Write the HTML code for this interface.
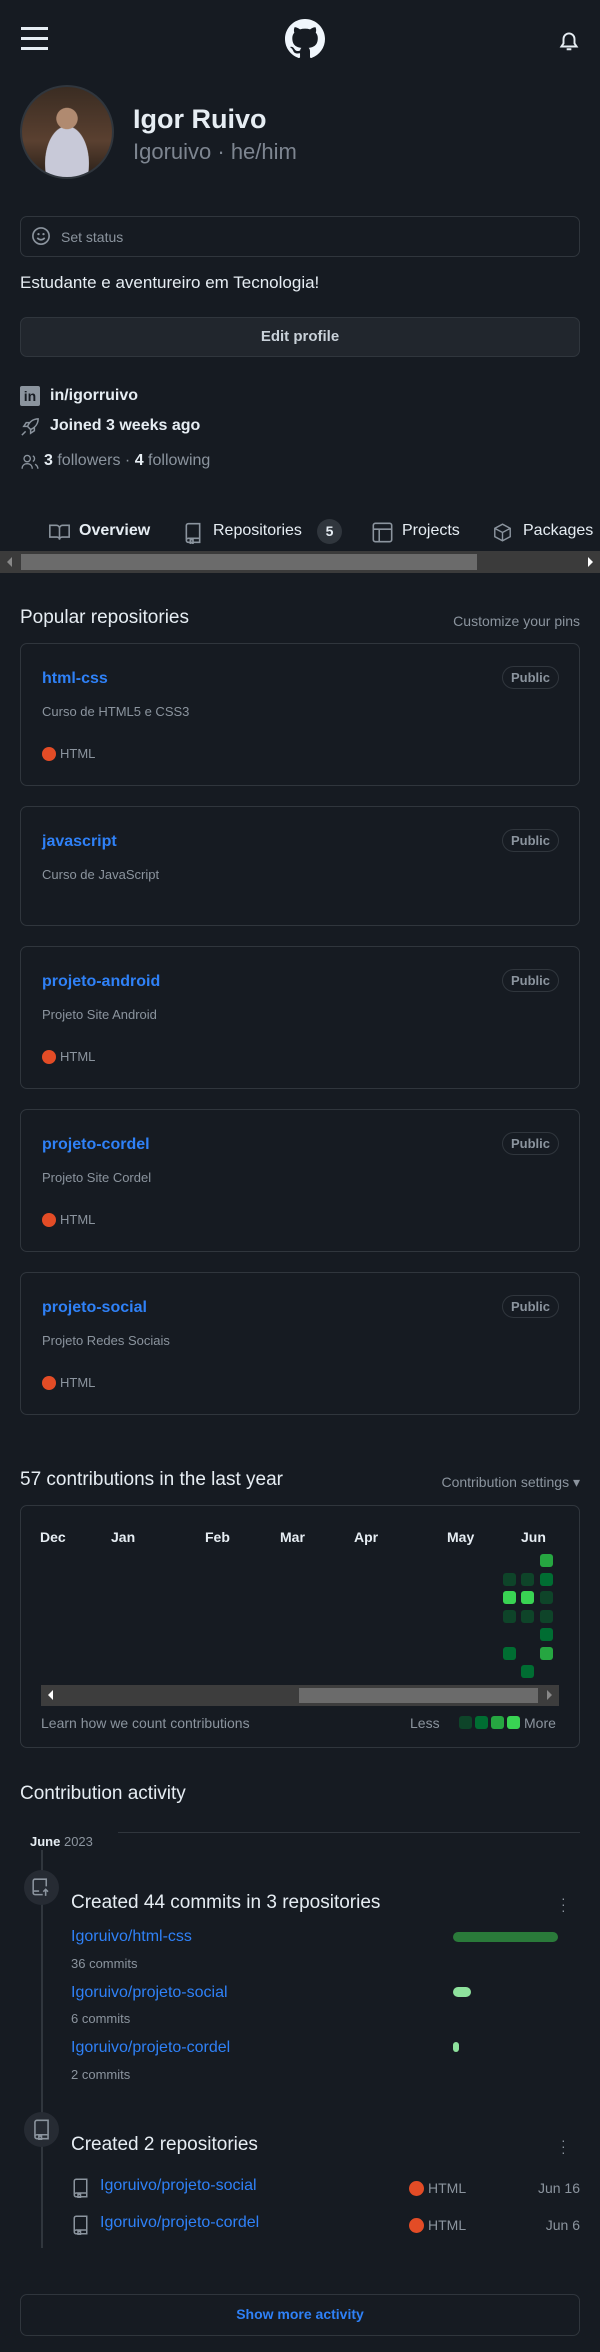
<!DOCTYPE html>
<html><head><meta charset="utf-8"><style>
*{margin:0;padding:0;box-sizing:border-box}
body{width:600px;height:2352px;background:#161b22;color:#e6edf3;font-family:"Liberation Sans",sans-serif;position:relative;overflow:hidden}
.a{position:absolute;white-space:nowrap}
.muted{color:#8b949e}
.link{color:#2f81f7}
.box{position:absolute;border:1px solid #30363d;border-radius:7px}
.card{position:absolute;left:20px;width:560px;border:1px solid #30363d;border-radius:7px}
.card .t{position:absolute;left:21px;top:26px;font-size:16px;font-weight:bold;color:#2f81f7}
.card .d{position:absolute;left:21px;top:60px;font-size:13px;color:#8b949e}
.card .p{position:absolute;right:20px;top:22px;border:1px solid #30363d;border-radius:14px;font-size:13px;font-weight:bold;color:#8b949e;padding:3px 8px}
.card .l{position:absolute;left:21px;top:102px;font-size:13px;color:#8b949e}
.dot{display:inline-block;width:14px;height:14px;border-radius:50%;background:#e34c26;vertical-align:-3px;margin-right:4px}
.c{position:absolute;width:13px;height:13px;border-radius:3px}
.g1{background:#0e4429}.g2{background:#006d32}.g3{background:#26a641}.g4{background:#39d353}
</style></head><body>
<div class="a" style="left:21px;top:27px;width:27px;height:3px;background:#e6edf3;box-shadow:0 10px 0 #e6edf3,0 20px 0 #e6edf3"></div>
<svg class="a" style="left:285px;top:19px" width="40" height="40" viewBox="0 0 16 16"><path fill="#f0f6fc" d="M8 0C3.58 0 0 3.58 0 8c0 3.54 2.29 6.530 5.47 7.59.4.07.55-.17.55-.38 0-.19-.01-.82-.01-1.49-2.01.37-2.53-.49-2.69-.94-.09-.23-.48-.94-.82-1.130-.28-.15-.68-.52-.01-.53.63-.01 1.080.58 1.230.82.72 1.21 1.870.87 2.330.66.07-.52.28-.87.51-1.07-1.78-.2-3.64-.89-3.64-3.95 0-.87.31-1.59.82-2.15-.08-.2-.36-1.02.08-2.12 0 0 .67-.21 2.2.82.64-.18 1.32-.27 2-.27.68 0 1.36.09 2 .27 1.53-1.04 2.2-.82 2.2-.82.44 1.1.16 1.92.08 2.12.51.56.82 1.27.82 2.15 0 3.07-1.87 3.75-3.65 3.95.29.25.54.73.54 1.48 0 1.07-.01 1.93-.01 2.2 0 .21.15.46.55.38A8.013 8.013 0 0016 8c0-4.42-3.58-8-8-8z"/></svg>
<svg class="a" style="left:558px;top:29px" width="22" height="24" viewBox="0 0 16 16"><path fill="none" stroke="#e6edf3" stroke-width="1.4" d="M2.5 12h11l-1.5-2.2V6.5a4 4 0 00-8 0v3.3zM6.3 14h3.4"/></svg>
<div class="a" style="left:20px;top:85px;width:94px;height:94px;border-radius:50%;border:2px solid #30363d;background:radial-gradient(circle at 50% 35%,#b08a70 0 14%,transparent 15%),radial-gradient(ellipse at 50% 85%,#c8c9d8 0 34%,transparent 35%),linear-gradient(#3a2c22,#5a4030 60%,#2a2018)"></div>
<div class="a" style="left:133px;top:104px;font-size:27px;font-weight:bold">Igor Ruivo</div>
<div class="a" style="left:133px;top:139px;font-size:22px;color:#7d8590">Igoruivo · he/him</div>
<div class="box" style="left:20px;top:216px;width:560px;height:41px"></div>
<svg class="a" style="left:31px;top:226px" width="20" height="20" viewBox="0 0 16 16"><circle cx="8" cy="8" r="6.5" fill="none" stroke="#8b949e" stroke-width="1.3"/><circle cx="6" cy="6.5" r=".9" fill="#8b949e"/><circle cx="10" cy="6.5" r=".9" fill="#8b949e"/><path d="M5 9.5q3 3 6 0" fill="none" stroke="#8b949e" stroke-width="1.3"/></svg>
<div class="a muted" style="left:61px;top:229px;font-size:14px">Set status</div>
<div class="a" style="left:20px;top:273px;font-size:17px">Estudante e aventureiro em Tecnologia!</div>
<div class="box" style="left:20px;top:317px;width:560px;height:40px;background:#21262d"></div>
<div class="a" style="left:0;width:600px;text-align:center;top:328px;font-size:15px;font-weight:bold;color:#c9d1d9">Edit profile</div>
<div class="a" style="left:20px;top:386px;width:20px;height:20px;background:#8b949e;border-radius:2px;color:#161b22;font-size:14px;font-weight:bold;text-align:center;line-height:21px">in</div>
<div class="a" style="left:50px;top:387px;font-size:16px;font-weight:bold">in/igorruivo</div>
<svg class="a" style="left:20px;top:417px" width="20" height="20" viewBox="0 0 16 16"><path fill="none" stroke="#8b949e" stroke-width="1.2" d="M14.5 1.5c-4 0-7 2.5-8.5 6l2.5 2.5c3.5-1.5 6-4.5 6-8.5zM6 7.5H3l2-3h3M8.5 10v3l3-2V8M4.5 11.5l-3 3"/></svg>
<div class="a" style="left:50px;top:417px;font-size:16px;font-weight:bold">Joined 3 weeks ago</div>
<svg class="a" style="left:20px;top:453px" width="20" height="18" viewBox="0 0 16 16"><circle cx="5.5" cy="5" r="2.8" fill="none" stroke="#8b949e" stroke-width="1.2"/><path d="M1 14c0-3 2-4.5 4.5-4.5S10 11 10 14M10.5 2.5a2.8 2.8 0 010 5M12.5 10c1.5.8 2.5 2 2.5 4" fill="none" stroke="#8b949e" stroke-width="1.2"/></svg>
<div class="a" style="left:44px;top:452px;font-size:16px;color:#8b949e"><b style="color:#e6edf3">3</b> followers · <b style="color:#e6edf3">4</b> following</div>
<svg class="a" style="left:49px;top:524px" width="21" height="17" viewBox="0 0 16 13"><path fill="none" stroke="#8b949e" stroke-width="1.2" d="M.6 1h5a2.4 2.4 0 012.4 2.4V12a2 2 0 00-2-2H.6zM15.4 1h-5A2.4 2.4 0 008 3.4V12a2 2 0 012-2h5.4z"/></svg>
<div class="a" style="left:79px;top:522px;font-size:16px;font-weight:bold">Overview</div>
<svg class="a" style="left:185px;top:522px" width="16" height="22" viewBox="0 0 12 16"><path fill="none" stroke="#8b949e" stroke-width="1.2" d="M1 13V2.5A1.5 1.5 0 012.5 1H11v11H2.5A1.5 1.5 0 001 13.5 1.5 1.5 0 002.5 15H4M6 15h5v-3M4 13v3l1-1 1 1v-3z"/></svg>
<div class="a" style="left:213px;top:522px;font-size:16px">Repositories</div>
<div class="a" style="left:317px;top:519px;width:25px;height:25px;border-radius:13px;background:#30363d;text-align:center;font-size:14px;font-weight:bold;line-height:25px">5</div>
<svg class="a" style="left:372px;top:522px" width="21" height="21" viewBox="0 0 16 16"><rect x="1" y="1" width="14" height="14" rx="1.5" fill="none" stroke="#8b949e" stroke-width="1.2"/><path d="M1 5.5h14M5.5 5.5V15" stroke="#8b949e" stroke-width="1.2"/></svg>
<div class="a" style="left:402px;top:522px;font-size:16px">Projects</div>
<svg class="a" style="left:493px;top:523px" width="19" height="19" viewBox="0 0 16 16"><path fill="none" stroke="#8b949e" stroke-width="1.2" d="M8 1l6.5 3.5v7L8 15l-6.5-3.5v-7zM1.5 4.5L8 8l6.5-3.5M8 8v7"/></svg>
<div class="a" style="left:523px;top:522px;font-size:16px">Packages</div>
<div class="a" style="left:0;top:551px;width:600px;height:22px;background:#3b3b3b"></div>
<div class="a" style="left:21px;top:554px;width:456px;height:16px;background:#6b6b6b"></div>
<div class="a" style="left:7px;top:557px;width:0;height:0;border:5px solid transparent;border-right:5px solid #888;border-left:0"></div>
<div class="a" style="left:588px;top:557px;width:0;height:0;border:5px solid transparent;border-left:5px solid #fff;border-right:0"></div>
<div class="a" style="left:20px;top:607px;font-size:19px">Popular repositories</div>
<div class="a muted" style="right:20px;top:613px;font-size:14px">Customize your pins</div>
<div class="card" style="top:643px;height:143px"><div class="t">html-css</div><div class="p">Public</div><div class="d">Curso de HTML5 e CSS3</div><div class="l"><span class="dot"></span>HTML</div></div>
<div class="card" style="top:806px;height:120px"><div class="t">javascript</div><div class="p">Public</div><div class="d">Curso de JavaScript</div></div>
<div class="card" style="top:946px;height:143px"><div class="t">projeto-android</div><div class="p">Public</div><div class="d">Projeto Site Android</div><div class="l"><span class="dot"></span>HTML</div></div>
<div class="card" style="top:1109px;height:143px"><div class="t">projeto-cordel</div><div class="p">Public</div><div class="d">Projeto Site Cordel</div><div class="l"><span class="dot"></span>HTML</div></div>
<div class="card" style="top:1272px;height:143px"><div class="t">projeto-social</div><div class="p">Public</div><div class="d">Projeto Redes Sociais</div><div class="l"><span class="dot"></span>HTML</div></div>
<div class="a" style="left:20px;top:1469px;font-size:19px">57 contributions in the last year</div>
<div class="a muted" style="right:20px;top:1474px;font-size:14px">Contribution settings ▾</div>
<div class="box" style="left:20px;top:1505px;width:560px;height:243px"></div>
<div class="a" style="top:1529px;left:40px;font-size:14px;font-weight:bold;color:#e6edf3">
<span class="a" style="left:0">Dec</span><span class="a" style="left:71px">Jan</span><span class="a" style="left:165px">Feb</span><span class="a" style="left:240px">Mar</span><span class="a" style="left:314px">Apr</span><span class="a" style="left:407px">May</span><span class="a" style="left:481px">Jun</span></div>
<div class="c g3" style="left:540px;top:1554px"></div>
<div class="c g1" style="left:503px;top:1573px"></div><div class="c g1" style="left:521px;top:1573px"></div><div class="c g2" style="left:540px;top:1573px"></div>
<div class="c g4" style="left:503px;top:1591px"></div><div class="c g4" style="left:521px;top:1591px"></div><div class="c g1" style="left:540px;top:1591px"></div>
<div class="c g1" style="left:503px;top:1610px"></div><div class="c g1" style="left:521px;top:1610px"></div><div class="c g1" style="left:540px;top:1610px"></div>
<div class="c g2" style="left:540px;top:1628px"></div>
<div class="c g2" style="left:503px;top:1647px"></div><div class="c g3" style="left:540px;top:1647px"></div>
<div class="c g2" style="left:521px;top:1665px"></div>
<div class="a" style="left:41px;top:1685px;width:518px;height:21px;background:#3d3d3d"></div>
<div class="a" style="left:299px;top:1688px;width:239px;height:15px;background:#6b6b6b"></div>
<div class="a" style="left:48px;top:1690px;border:5px solid transparent;border-right:5px solid #fff;border-left:0"></div>
<div class="a" style="left:547px;top:1690px;border:5px solid transparent;border-left:5px solid #888;border-right:0"></div>
<div class="a muted" style="left:41px;top:1715px;font-size:14px">Learn how we count contributions</div>
<div class="a muted" style="left:410px;top:1715px;font-size:14px">Less</div>
<div class="c g1" style="left:459px;top:1716px"></div><div class="c g2" style="left:475px;top:1716px"></div><div class="c g3" style="left:491px;top:1716px"></div><div class="c g4" style="left:507px;top:1716px"></div>
<div class="a muted" style="left:524px;top:1715px;font-size:14px">More</div>
<div class="a" style="left:20px;top:1783px;font-size:19px">Contribution activity</div>
<div class="a" style="left:30px;top:1834px;font-size:13px"><b>June</b> <span class="muted">2023</span></div>
<div class="a" style="left:118px;top:1832px;width:462px;height:1px;background:#30363d"></div>
<div class="a" style="left:41px;top:1850px;width:2px;height:398px;background:#30363d"></div>
<div class="a" style="left:24px;top:1870px;width:35px;height:35px;border-radius:50%;background:#262b33"></div>
<svg class="a" style="left:32px;top:1877px" width="19" height="21" viewBox="0 0 16 16"><path fill="none" stroke="#8b949e" stroke-width="1.3" d="M9 14H2.5A1.5 1.5 0 011 12.5v-10A1.5 1.5 0 012.5 1H12v6M1 11h5M11.5 15V9.5M9.5 11.5l2-2 2 2"/></svg>
<div class="a" style="left:71px;top:1892px;font-size:19px">Created 44 commits in 3 repositories</div>
<div class="a muted" style="left:561px;top:1895px;font-size:14px;line-height:6px;text-align:center">·<br>·<br>·</div>
<div class="a link" style="left:71px;top:1928px;font-size:16px">Igoruivo/html-css</div>
<div class="a muted" style="left:71px;top:1956px;font-size:13px">36 commits</div>
<div class="a" style="left:453px;top:1932px;width:105px;height:10px;border-radius:5px;background:#2a7a3a"></div>
<div class="a link" style="left:71px;top:1984px;font-size:16px">Igoruivo/projeto-social</div>
<div class="a muted" style="left:71px;top:2011px;font-size:13px">6 commits</div>
<div class="a" style="left:453px;top:1987px;width:18px;height:10px;border-radius:5px;background:#8ee29d"></div>
<div class="a link" style="left:71px;top:2039px;font-size:16px">Igoruivo/projeto-cordel</div>
<div class="a muted" style="left:71px;top:2067px;font-size:13px">2 commits</div>
<div class="a" style="left:453px;top:2042px;width:6px;height:10px;border-radius:3px;background:#8ee29d"></div>
<div class="a" style="left:24px;top:2112px;width:35px;height:35px;border-radius:50%;background:#262b33"></div>
<svg class="a" style="left:33px;top:2119px" width="17" height="21" viewBox="0 0 12 16"><path fill="none" stroke="#8b949e" stroke-width="1.2" d="M1 13V2.5A1.5 1.5 0 012.5 1H11v11H2.5A1.5 1.5 0 001 13.5 1.5 1.5 0 002.5 15H4M6 15h5v-3M4 13v3l1-1 1 1v-3z"/></svg>
<div class="a" style="left:71px;top:2134px;font-size:19px">Created 2 repositories</div>
<div class="a muted" style="left:561px;top:2137px;font-size:14px;line-height:6px;text-align:center">·<br>·<br>·</div>
<svg class="a" style="left:73px;top:2178px" width="15" height="20" viewBox="0 0 12 16"><path fill="none" stroke="#8b949e" stroke-width="1.2" d="M1 13V2.5A1.5 1.5 0 012.5 1H11v11H2.5A1.5 1.5 0 001 13.5 1.5 1.5 0 002.5 15H4M6 15h5v-3M4 13v3l1-1 1 1v-3z"/></svg>
<div class="a link" style="left:100px;top:2177px;font-size:16px">Igoruivo/projeto-social</div>
<div class="a muted" style="left:409px;top:2180px;font-size:14px"><span class="dot" style="width:15px;height:15px"></span>HTML</div>
<div class="a muted" style="right:20px;top:2180px;font-size:14px">Jun 16</div>
<svg class="a" style="left:73px;top:2215px" width="15" height="20" viewBox="0 0 12 16"><path fill="none" stroke="#8b949e" stroke-width="1.2" d="M1 13V2.5A1.5 1.5 0 012.5 1H11v11H2.5A1.5 1.5 0 001 13.5 1.5 1.5 0 002.5 15H4M6 15h5v-3M4 13v3l1-1 1 1v-3z"/></svg>
<div class="a link" style="left:100px;top:2214px;font-size:16px">Igoruivo/projeto-cordel</div>
<div class="a muted" style="left:409px;top:2217px;font-size:14px"><span class="dot" style="width:15px;height:15px"></span>HTML</div>
<div class="a muted" style="right:20px;top:2217px;font-size:14px">Jun 6</div>
<div class="box" style="left:20px;top:2294px;width:560px;height:42px"></div>
<div class="a link" style="left:0;width:600px;text-align:center;top:2306px;font-size:14px;font-weight:bold">Show more activity</div>
</body></html>
